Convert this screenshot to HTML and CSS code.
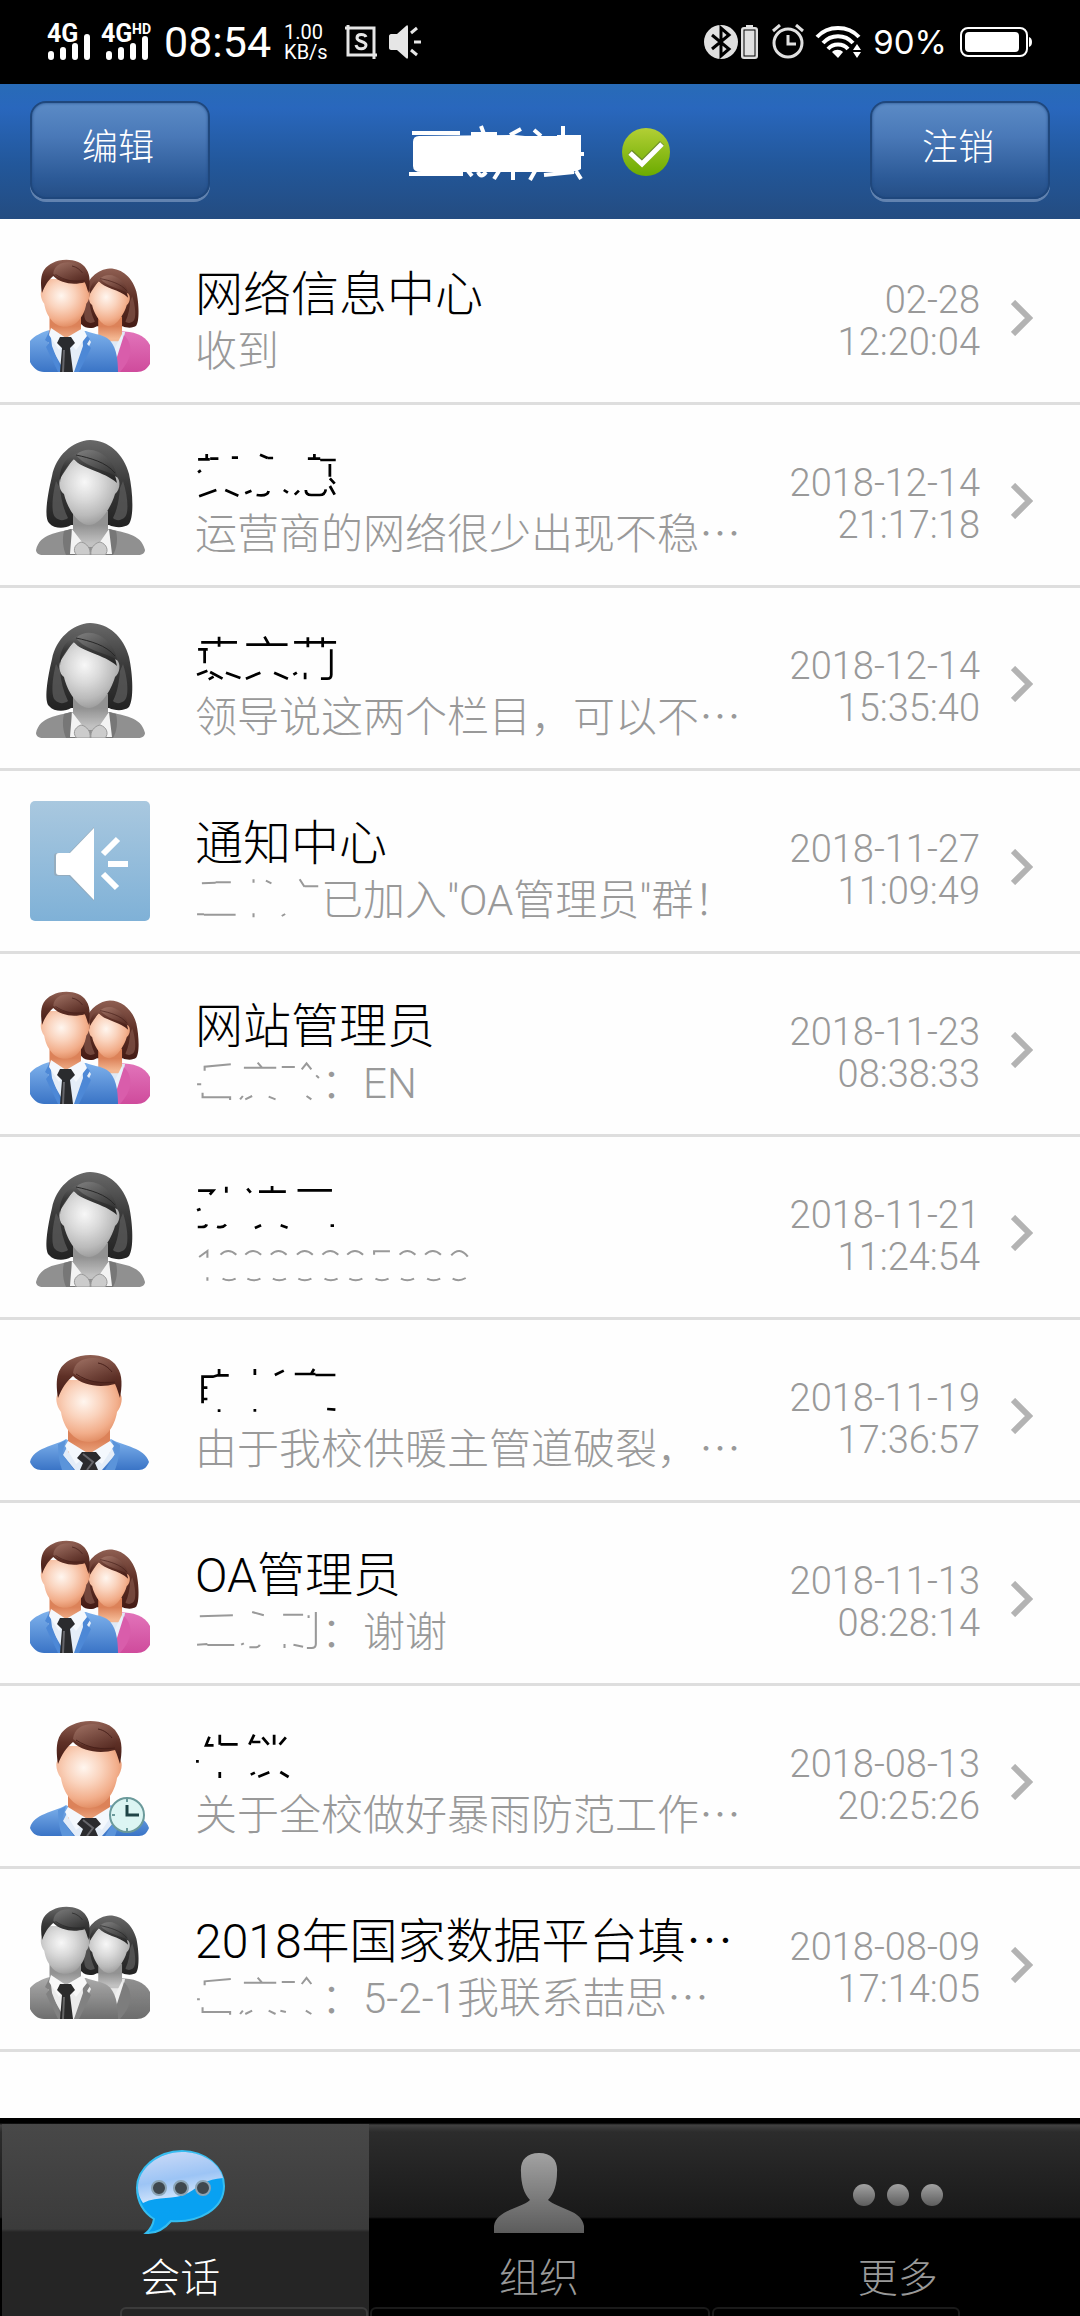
FILE: index.html
```html
<!DOCTYPE html>
<html lang="zh-CN">
<head>
  <meta charset="UTF-8" />
  <meta name="viewport" content="width=device-width, initial-scale=1" />
  <title>会话</title>
  <link rel="stylesheet" href="styles.css">
</head>
<body>
  <!-- Shared icons -->
  <svg class="defs" width="0" height="0" aria-hidden="true">
    <defs>
      <radialGradient id="skin" cx="0.42" cy="0.35" r="0.68">
        <stop offset="0" stop-color="#fff6ef" />
        <stop offset="0.4" stop-color="#fad3bd" />
        <stop offset="0.75" stop-color="#f2ae8b" />
        <stop offset="1" stop-color="#e08a60" />
      </radialGradient>
      <linearGradient id="neck" x1="0" y1="0" x2="0" y2="1">
        <stop offset="0.4" stop-color="#dc8259" />
        <stop offset="0.9" stop-color="#f4b893" />
      </linearGradient>
      <linearGradient id="hair" x1="0" y1="0" x2="0" y2="1">
        <stop offset="0" stop-color="#8f5f52" />
        <stop offset="0.5" stop-color="#5e3026" />
        <stop offset="1" stop-color="#431a14" />
      </linearGradient>
      <linearGradient id="lock" x1="0" y1="0" x2="1" y2="1">
        <stop offset="0" stop-color="#a87b6d" />
        <stop offset="1" stop-color="#542820" />
      </linearGradient>
      <linearGradient id="blue" x1="0" y1="0" x2="0" y2="1">
        <stop offset="0" stop-color="#7fb2ec" />
        <stop offset="1" stop-color="#3a74c6" />
      </linearGradient>
      <linearGradient id="pink" x1="0" y1="0" x2="0" y2="1">
        <stop offset="0" stop-color="#e274ba" />
        <stop offset="1" stop-color="#cf4b9c" />
      </linearGradient>
      <linearGradient id="sky" x1="0" y1="0" x2="0" y2="1">
        <stop offset="0" stop-color="#a9c8df" />
        <stop offset="1" stop-color="#7fb1d7" />
      </linearGradient>
      <linearGradient id="green" x1="0" y1="0" x2="0" y2="1">
        <stop offset="0" stop-color="#b2cf35" />
        <stop offset="1" stop-color="#6bab00" />
      </linearGradient>
      <linearGradient id="bubbleTop" x1="0" y1="0" x2="0.3" y2="1">
        <stop offset="0" stop-color="#cfdcf7" />
        <stop offset="0.6" stop-color="#9cc4f5" />
        <stop offset="1" stop-color="#d7e8fc" />
      </linearGradient>
      <linearGradient id="metal" x1="0" y1="0" x2="0" y2="1">
        <stop offset="0" stop-color="#a2a2a2" />
        <stop offset="1" stop-color="#5c5c5c" />
      </linearGradient>
    </defs>

    <symbol id="man-head" viewBox="0 0 120 120">
      <path d="M38 76h42v26L59 114 38 102z" fill="url(#neck)" />
      <path d="M28 44c-3 2-2 12 3 18 2 14 12 30 28 30s26-16 28-30c5-6 6-16 3-18L86 30H34z" fill="url(#skin)" />
      <path d="M28 48c-3-20-1-32 14-39C56 2 80 4 87 17c6 8 5 20 3 31-2-6-3-10-5-14-14 4-32 2-42-8-7 6-11 12-15 22z" fill="url(#hair)" />
      <path d="M43 23c1-10 9-15 20-15 10 0 17 4 22 12 2 4 2 8 0 10-15 4-33 1-42-7z" fill="url(#lock)" opacity="0.75" />
      <path d="M68 13c6 1 11 5 14 9M46 24c12 8 25 10 39 8" fill="none" stroke="#47201a" />
    </symbol>

    <symbol id="woman-head" viewBox="0 0 120 120">
      <path d="M60 5c-18 1-34 16-38 36-5 21-8 42-3 47 5 6 16 6 22 2h38c6 3 16 3 20-1 5-7 4-32 0-50C94 19 78 5 60 5z" fill="url(#hair)" />
      <path d="M26 46c-4 15-5 32-1 36 4 4 9 4 13 1-5-10-7-20-8-30zM93 46c5 15 6 32 2 36-4 4-9 4-12 1 5-10 6-20 7-30z" fill="#7d5045" opacity="0.8" />
      <path d="M43 76h35v36H43z" fill="url(#neck)" />
      <path d="M31 42c-3 4-2 14 3 17 3 14 14 31 25 31s22-17 26-31c5-4 6-13 2-17L43 24z" fill="url(#skin)" />
      <path d="M30 48c0-8 6-16 14-24 7 10 30 12 43 24-2-12-10-26-22-32-12-2-28 4-32 14-3 6-4 12-3 18z" fill="url(#hair)" />
      <path d="M46 20c10-9 22-5 30 2 6 6 10 12 11 20-12-8-31-9-41-22z" fill="url(#lock)" opacity="0.8" />
      <path d="M46 20c14 3 30 7 39 18" fill="none" stroke="#47201a" />
    </symbol>

    <symbol id="man" viewBox="0 0 120 120">
      <path d="M36 89C23 97 4 97 0 112c2 5 6 8 11 8h98c5 0 8-3 10-8-5-15-24-15-38-23L59 102z" fill="url(#blue)" />
      <path d="M40 91l-7 14 12 15h27l13-15-6-14-20 11z" fill="#e4edf8" />
      <path d="M36 90l-4 14 12 16H32c-3-8-4-18-4-26zM82 90l3 14-10 16h10c3-8 5-18 5-25z" fill="#5b94da" />
      <use href="#man-head" width="120" height="120" />
      <path d="M59 104l-21-13-3 5 11 18zM59 104l21-13 4 5-12 18z" fill="#f4f8fd" />
      <path d="M52 102h14l5 6-6 5 3 7H50l3-7-6-5z" fill="#2b2b2e" />
      <path d="M53 104l10 8-6 8" fill="none" stroke="#66666b" stroke-width="2" />
    </symbol>

    <symbol id="woman" viewBox="0 0 120 120">
      <path d="M41 94C28 98 10 98 6 115c0 3 3 5 7 5h95c4 0 7-2 7-5-4-17-22-17-35-21z" fill="#909090" />
      <path d="M34 96c-2 8-1 17 2 24h9l-4-26zM86 96c2 8 1 17-3 24h-9l5-26z" fill="#777" />
      <use href="#woman-head" width="120" height="120" />
      <path d="M42 94l-2 25h20l-8-12zM79 94l3 25H61l9-12z" fill="#f3f3f3" />
      <path d="M51 107c-8 3-8 10-4 13h13c1-6-3-12-9-13zM70 107c-6 1-10 7-9 13h14c4-4 2-11-5-13z" fill="#ccc" stroke="#999" />
    </symbol>

    <symbol id="group" viewBox="0 0 120 120">
      <g>
        <path d="M70 82c14-4 42-6 50 11v19c-3 5-7 8-13 8H76z" fill="url(#pink)" />
        <path d="M68 80h27l-3 16-7 12z" fill="#dfe9f5" />
        <use href="#woman-head" width="120" height="120" transform="translate(39 13) scale(0.68)" />
        <path d="M92 82l3 16-8 22h-3l-2-18z" fill="#e9f1fa" />
        <path d="M94 83c10 10 8 24-4 37h-3l-1-12z" fill="#d95dab" />
      </g>
      <path d="M20 78C12 80 4 84 0 89v21c3 6 8 10 14 10h74c0-14-2-28-11-34-6-4-14-4-21-7z" fill="url(#blue)" />
      <path d="M23 77l-5 13 17 30h12l14-30-9-13z" fill="#e4edf8" />
      <path d="M20 78l-5 10 4 3-3 4 12 25h4L22 94zM52 78l8 9-3 5 4 4-12 24h-5l9-26z" fill="#4d88d6" />
      <use href="#man-head" width="120" height="120" transform="translate(-9 4) scale(0.75 0.77)" />
      <path d="M36 86L21 76l-2 7 10 15zM36 86l17-10 4 8-11 14z" fill="#f4f8fd" />
      <path d="M30 85h11l4 6-5 5 3 24H30l2-24-5-5z" fill="#2a2b2e" />
      <path d="M34 98l-1 22" stroke="#66666b" stroke-width="2" />
    </symbol>

    <symbol id="speaker" viewBox="0 0 120 120">
      <rect width="120" height="120" rx="5" fill="url(#sky)" />
      <path d="M27 52c-2 0-3 1-3 3v17c0 2 1 3 3 3h12l25 25V26L39 52z" fill="#95a6b3" opacity="0.7" />
      <path d="M29 52c-2 0-3 1-3 3v16c0 2 1 3 3 3h11l24 25V27L40 52z" fill="#fff" />
      <path d="M73 53l15-15M78 63h20M73 73l14 14" stroke="#fff" stroke-width="6" />
    </symbol>
  </svg>

  <!-- Phone status bar -->
  <div class="status">
    <div class="status-side">
      <svg class="signal" width="44" height="36" viewBox="0 0 44 36">
        <text x="-1" y="18" class="net">4G</text>
        <path d="M3 30v3M15 26v7M27 22v11M39 13v20" stroke="#fff" stroke-width="6" stroke-linecap="round" />
      </svg>
      <svg class="signal" width="52" height="36" viewBox="0 0 52 36">
        <text x="-1" y="18" class="net">4G</text>
        <text x="30" y="10" class="hd">HD</text>
        <path d="M7 30v3M19 26v7M31 22v11M43 15v18" stroke="#fff" stroke-width="6" stroke-linecap="round" />
      </svg>
      <span class="clock">08:54</span>
      <span class="speed">1.00<br />KB/s</span>
      <svg class="shot" width="32" height="34" viewBox="0 0 32 34" fill="none" stroke="#e6e6e6" stroke-width="3">
        <path d="M0 3h29v31M3 0v30h29" />
        <path d="M21 12c-1-3-9-4-9 1 0 4 9 3 9 7 0 5-9 5-10 0" />
      </svg>
      <svg width="32" height="34" viewBox="0 0 32 34">
        <path d="M2 9h6l9-8c1-1 2-1 2 1v30c0 2-1 2-2 1l-9-8H2c-1 0-2-1-2-2V11c0-1 1-2 2-2z" fill="#e6e6e6" />
        <path d="M22 8l6-5M25 17h8M22 25l6 5" stroke="#e6e6e6" stroke-width="3" />
      </svg>
    </div>
    <div class="status-side right">
      <svg width="56" height="36" viewBox="0 0 56 36">
        <circle cx="18" cy="18" r="17" fill="#e0e0e0" />
        <path d="M9 11l17 14-8 7V4l8 7L9 25" fill="none" stroke="#000" stroke-width="3" />
        <path d="M43 1h7v3h-7z" fill="#e0e0e0" />
        <rect x="38" y="3" width="17" height="32" rx="3" fill="#e0e0e0" />
        <rect x="41" y="6" width="11" height="26" fill="none" stroke="#000" />
      </svg>
      <svg class="alarm" width="34" height="36" viewBox="0 0 34 36" fill="none" stroke="#e0e0e0" stroke-width="3">
        <circle cx="17" cy="19" r="14" />
        <path d="M17 11v9h8M2 7l7-6M25 1l7 6" />
      </svg>
      <svg class="wifi" width="46" height="34" viewBox="0 0 46 34">
        <path d="M2 12c11-12 31-12 42 0M8 18c8-9 22-9 30 0M13 24c5-6 15-6 20 0" fill="none" stroke="#fff" stroke-width="4" />
        <path d="M17 27c3-3 8-3 11 0l-5 6z" fill="#fff" />
        <path d="M38 25l4-6 4 6zM38 27l4 6 4-6z" fill="#fff" />
      </svg>
      <span class="percent">90%</span>
      <svg class="battery" width="72" height="30" viewBox="0 0 72 30">
        <rect x="1" y="1" width="66" height="28" rx="7" fill="none" stroke="#fff" stroke-width="2" />
        <rect x="5" y="5" width="54" height="20" rx="4" fill="#fff" />
        <path d="M69 10q3 1 3 5t-3 5z" fill="#fff" />
      </svg>
    </div>
  </div>

  <!-- Title bar -->
  <header class="topbar">
    <button type="button" class="bar-btn">编辑</button>
    <h1 class="title">
      <svg width="176" height="60" viewBox="408 122 176 60" role="img" aria-label="已隐藏">
        <path d="M418 136q-6 0-6 6v24q0 6 8 6h142l14-1 4-2v-33h-56l-10-1z" fill="#fff" />
        <path d="M411 133h48M408 174h54M470 134h26M480 126l3 8M509 135l11-6M533 130l7 6M562 126v10M556 137h24M578 154h5M543 175l30-3M575 171l5 8M467 171l4 5M477 172q3 7 8 0M493 179l5-8M512 171v9M529 180l5-9" fill="none" stroke="#fff" stroke-width="4" />
      </svg>
      <svg width="50" height="50" viewBox="0 0 50 50" role="img" aria-label="在线">
        <circle cx="25" cy="25" r="24" fill="url(#green)" />
        <path d="M9 25l12 11 20-20" fill="none" stroke="#6d8d2a" stroke-width="6" />
        <path d="M9 26l12 11 20-20" fill="none" stroke="#fff" stroke-width="5" />
      </svg>
    </h1>
    <button type="button" class="bar-btn">注销</button>
  </header>

  <!-- Conversations -->
  <ul class="chats">
    <li>
      <a href="#" class="chat">
        <svg class="avatar"><use href="#group" /></svg>
        <div class="text">
          <div class="name">网络信息中心</div>
          <div class="msg">收到</div>
        </div>
        <time class="when">02-28<br />12:20:04</time>
        <svg class="arrow" viewBox="0 0 22 36"><path d="M2 2l16 16L2 34" /></svg>
      </a>
    </li>
    <li>
      <a href="#" class="chat">
        <svg class="avatar gray"><use href="#woman" /></svg>
        <div class="text">
          <div class="name">
            <svg class="mask" width="160" height="60" viewBox="566 645 465 180" preserveAspectRatio="none" role="img" aria-label="已隐藏">
              <path d="M575 688h34M600 672v18M610 686h24M673 683h18M755 674l22 10M777 684h16M894 686h36M913 672v14M930 690h45M958 702v38M575 727l8-6M578 799l50-19M654 780l38 17M712 790l18-8M745 795q32 5 35-12M824 780l12 8M856 794l12-12M888 780q0 15 16 15h24q16 0 18-17M958 745l14 16M958 768l14 26" />
            </svg>
          </div>
          <div class="msg">运营商的网络很少出现不稳⋯</div>
        </div>
        <time class="when">2018-12-14<br />21:17:18</time>
        <svg class="arrow" viewBox="0 0 22 36"><path d="M2 2l16 16L2 34" /></svg>
      </a>
    </li>
    <li>
      <a href="#" class="chat">
        <svg class="avatar gray"><use href="#woman" /></svg>
        <div class="text">
          <div class="name">
            <svg class="mask" width="160" height="60" viewBox="566 114 465 180" preserveAspectRatio="none" role="img" aria-label="已隐藏">
              <path d="M584 157h104M636 140v30M575 178h28M594 178v42M572 254l30-12M606 268l14-8M610 246l36 20M656 248l42 16M715 164h120M768 140l12 22M714 266l42-18M796 248l40 18M854 157h122M894 142v30M937 142v30M962 178v76q0 12-12 12h-18M886 248v20M852 254l10-6" />
            </svg>
          </div>
          <div class="msg">领导说这两个栏目，可以不⋯</div>
        </div>
        <time class="when">2018-12-14<br />15:35:40</time>
        <svg class="arrow" viewBox="0 0 22 36"><path d="M2 2l16 16L2 34" /></svg>
      </a>
    </li>
    <li>
      <a href="#" class="chat">
        <svg class="avatar"><use href="#speaker" /></svg>
        <div class="text">
          <div class="name">通知中心</div>
          <div class="msg">
            <svg class="mask" width="126" height="54" viewBox="566 843 366 162" preserveAspectRatio="none" role="img" aria-label="已隐藏">
              <path d="M586 880l40-2M626 877h44M572 973h20M592 974h92M736 868v10M772 872l16 8M736 970v12M818 978l10-6M870 868l14 22M884 889h40" />
            </svg>已加入"OA管理员"群！
          </div>
        </div>
        <time class="when">2018-11-27<br />11:09:49</time>
        <svg class="arrow" viewBox="0 0 22 36"><path d="M2 2l16 16L2 34" /></svg>
      </a>
    </li>
    <li>
      <a href="#" class="chat">
        <svg class="avatar"><use href="#group" /></svg>
        <div class="text">
          <div class="name">网站管理员</div>
          <div class="msg">
            <svg class="mask" width="126" height="54" viewBox="566 282 366 162" preserveAspectRatio="none" role="img" aria-label="已隐藏">
              <path d="M594 332v-12l76-7M572 373h12M588 398v14h80v8M708 323h94M748 308l12 14M818 321h38M876 328l14-18 14 18M918 346l8 8M697 418l8-10M712 418l20-10M780 410l20 8M890 408l14 10" />
            </svg>：EN
          </div>
        </div>
        <time class="when">2018-11-23<br />08:38:33</time>
        <svg class="arrow" viewBox="0 0 22 36"><path d="M2 2l16 16L2 34" /></svg>
      </a>
    </li>
    <li>
      <a href="#" class="chat">
        <svg class="avatar gray"><use href="#woman" /></svg>
        <div class="text">
          <div class="name">
            <svg class="mask" width="160" height="60" viewBox="566 651 465 180" preserveAspectRatio="none" role="img" aria-label="已隐藏">
              <path d="M575 692h44l-10 12M657 680v18M718 686l10 12M752 695h78M790 678v18M864 691h100M572 751l10-4M574 801h12q12 0 14-8M630 800q16 5 26-6M740 804l18-8M815 796l20 7M960 797h10" />
            </svg>
          </div>
          <div class="msg">
            <svg class="mask" width="280" height="54" viewBox="566 831 813 162" preserveAspectRatio="none" role="img" aria-label="已隐藏">
              <path d="M578 891l24-18v20M602 952v10M640 884q22-22 46 0M712 884q22-22 46 0M786 884q22-22 46 0M862 884q22-22 46 0M936 884q22-22 46 0M1008 884q22-22 46 0M1086 884v-10h46M1160 884q22-22 46 0M1234 884q22-22 46 0M1310 886q24-28 48 4M646 956q18 10 38 0M718 956q18 10 38 0M792 956q18 10 38 0M866 956q18 10 38 0M942 956q18 10 38 0M1014 956q18 10 38 0M1090 956q18 10 38 0M1164 956q18 10 38 0M1240 956q18 10 38 0M1314 956q18 10 38-2" />
            </svg>
          </div>
        </div>
        <time class="when">2018-11-21<br />11:24:54</time>
        <svg class="arrow" viewBox="0 0 22 36"><path d="M2 2l16 16L2 34" /></svg>
      </a>
    </li>
    <li>
      <a href="#" class="chat">
        <svg class="avatar"><use href="#man" /></svg>
        <div class="text">
          <div class="name">
            <svg class="mask" width="160" height="60" viewBox="566 120 465 180" preserveAspectRatio="none" role="img" aria-label="已隐藏">
              <path d="M588 250v-80h30l14-4h32M588 203h14M588 237h14M636 147v18M740 147v18M798 165l26-13M856 162h60M912 147l-8 14M916 165h58M636 268v8M736 271h8M950 267l24 2" />
            </svg>
          </div>
          <div class="msg">由于我校供暖主管道破裂，⋯</div>
        </div>
        <time class="when">2018-11-19<br />17:36:57</time>
        <svg class="arrow" viewBox="0 0 22 36"><path d="M2 2l16 16L2 34" /></svg>
      </a>
    </li>
    <li>
      <a href="#" class="chat">
        <svg class="avatar"><use href="#group" /></svg>
        <div class="text">
          <div class="name">OA管理员</div>
          <div class="msg">
            <svg class="mask" width="126" height="54" viewBox="566 849 366 162" preserveAspectRatio="none" role="img" aria-label="已隐藏">
              <path d="M580 889l96-3M572 974l30-2M602 975h78M732 876l34 10M822 884h58M896 886v8M917 876v96q0 12-12 12h-14M724 982h14q14 0 16-8M700 974l8-4M826 972v12M852 974l28 6" />
            </svg>：谢谢
          </div>
        </div>
        <time class="when">2018-11-13<br />08:28:14</time>
        <svg class="arrow" viewBox="0 0 22 36"><path d="M2 2l16 16L2 34" /></svg>
      </a>
    </li>
    <li>
      <a href="#" class="chat">
        <svg class="avatar" viewBox="0 0 120 120">
          <use href="#man" />
          <circle cx="97" cy="99" r="17" fill="#dcf5f3" stroke="#6b9a9b" stroke-width="2" />
          <path d="M97 89v10h12" fill="none" stroke="#1f4447" stroke-width="3" />
          <path d="M97 83v3M97 112v3M82 99h3" stroke="#6b9a9b" stroke-width="2" />
        </svg>
        <div class="text">
          <div class="name">
            <svg class="mask" width="160" height="60" viewBox="566 138 465 180" preserveAspectRatio="none" role="img" aria-label="已隐藏">
              <path d="M608 170l-10 26h22M638 164v30M640 193h50M738 164l-14 30M732 186h24M762 172l18 22M796 164v30M830 172l-18 22M573 240v8M638 276v18M728 284l12-6M750 290l32-13M814 276l24 15" />
            </svg>
          </div>
          <div class="msg">关于全校做好暴雨防范工作⋯</div>
        </div>
        <time class="when">2018-08-13<br />20:25:26</time>
        <svg class="arrow" viewBox="0 0 22 36"><path d="M2 2l16 16L2 34" /></svg>
      </a>
    </li>
    <li>
      <a href="#" class="chat">
        <svg class="avatar gray"><use href="#group" /></svg>
        <div class="text">
          <div class="name">2018年国家数据平台填⋯</div>
          <div class="msg">
            <svg class="mask" width="126" height="54" viewBox="566 867 366 162" preserveAspectRatio="none" role="img" aria-label="已隐藏">
              <path d="M594 916v-12l76-7M572 958h8M588 982v14h80v8M708 908h94M748 893l12 14M818 906h38M876 912l14-18 14 18M697 1002l8-10M712 1002l20-10M780 992l20 10M814 992l16 4M888 992l16 10" />
            </svg>：5-2-1我联系喆思⋯
          </div>
        </div>
        <time class="when">2018-08-09<br />17:14:05</time>
        <svg class="arrow" viewBox="0 0 22 36"><path d="M2 2l16 16L2 34" /></svg>
      </a>
    </li>
  </ul>

  <!-- Bottom tabs -->
  <nav class="tabs">
    <a href="#" class="tab active">
      <svg width="90" height="90" viewBox="0 0 90 90">
        <path d="M47 4C22 4 2 22 2 41c0 14 7 25 17 31-1 6-4 11-8 14 11 1 19-5 25-12 28 2 53-12 53-35C89 20 70 4 47 4z" fill="#08a1f2" stroke="#35bdf0" stroke-width="2" />
        <path d="M47 5C23 5 3 22 3 41c0 6 2 11 5 15 16-8 30-2 45-10 12-7 18-14 35-15C84 15 66 5 47 5z" fill="url(#bubbleTop)" />
        <g fill="#3f484e" stroke="#8ba4b5" stroke-width="2">
          <circle cx="24" cy="41" r="7" />
          <circle cx="46" cy="41" r="7" />
          <circle cx="68" cy="41" r="7" />
        </g>
      </svg>
      <span>会话</span>
    </a>
    <a href="#" class="tab">
      <svg width="90" height="90" viewBox="0 0 90 90">
        <path d="M45 6c-13 0-19 8-18 19 0 12 3 22 9 28C26 62 2 63 0 79v7h90v-7C88 63 64 62 54 53c6-6 9-16 9-28C64 14 58 6 45 6z" fill="url(#metal)" />
      </svg>
      <span>组织</span>
    </a>
    <a href="#" class="tab">
      <svg width="90" height="90" viewBox="0 0 90 90" fill="url(#metal)">
        <circle cx="11" cy="48" r="11" />
        <circle cx="45" cy="48" r="11" />
        <circle cx="79" cy="48" r="11" />
      </svg>
      <span>更多</span>
    </a>
    <div class="edge"><i></i><i></i><i></i></div>
  </nav>
</body>
</html>
```

FILE: styles.css
```css
* {
  margin: 0;
  padding: 0;
  box-sizing: border-box;
}
body {
  min-height: 100vh;
  display: flex;
  flex-direction: column;
  background: #fefefe;
  font-family: Roboto, 'Noto Sans CJK SC', sans-serif;
  font-weight: 300;
  color: #000;
}
a {
  color: inherit;
  text-decoration: none;
}
svg {
  display: block;
  flex: none;
}
.defs {
  position: absolute;
}

/* Status bar */
.status {
  height: 84px;
  padding: 0 48px;
  display: flex;
  justify-content: space-between;
  align-items: center;
  background: #000;
  color: #fff;
  font-weight: 400;
}
.status-side {
  display: flex;
  align-items: center;
}
.signal {
  margin-right: 10px;
  overflow: visible;
}
.net {
  font-size: 25px;
  font-weight: 700;
  fill: #fff;
}
.hd {
  font-size: 14px;
  font-weight: 700;
  fill: #fff;
}
.clock {
  font-size: 43px;
  line-height: 48px;
}
.speed {
  margin: 0 17px 0 13px;
  font-size: 20px;
  line-height: 20px;
}
.shot {
  margin-right: 12px;
}
.alarm {
  margin-left: 12px;
}
.wifi {
  margin: 0 12px 0 10px;
}
.percent {
  margin-right: 13px;
  font-family: Inter, sans-serif;
  font-size: 33px;
  line-height: 40px;
}

/* Title bar */
.topbar {
  height: 135px;
  padding: 0 30px;
  display: flex;
  justify-content: space-between;
  align-items: center;
  background: linear-gradient(#286bb7, #2967bd 18%, #22579a 60%, #244c81);
}
.title {
  display: flex;
  align-items: center;
  gap: 36px;
}
.bar-btn {
  width: 180px;
  height: 98px;
  margin-bottom: 3px;
  padding: 0 4px 4px 0;
  border: 2px solid #1f477c;
  border-radius: 16px;
  background: linear-gradient(#5b8bc6, #4a79b8 35%, #2c5a97 80%, #264f86);
  box-shadow: 0 3px 0 #6283b0, inset 0 0 3px #1f4b87;
  font: inherit;
  font-size: 36px;
  line-height: 48px;
  color: #fff;
}

/* Conversation list */
.chats {
  flex: 1;
  padding-top: 3px;
  list-style: none;
}
.chat {
  height: 183px;
  padding: 0 47px 0 30px;
  display: flex;
  align-items: flex-start;
  border-bottom: 3px solid #dedede;
}
.avatar {
  width: 120px;
  height: 120px;
  margin: 30px 45px 0 0;
}
.gray {
  filter: grayscale(1);
}
.text {
  flex: 1;
  min-width: 0;
  padding-top: 43px;
  white-space: nowrap;
}
.name {
  height: 60px;
  display: flex;
  font-size: 48px;
  line-height: 60px;
}
.msg {
  height: 54px;
  display: flex;
  font-size: 42px;
  line-height: 54px;
  color: #999;
}
.mask {
  margin-top: -3px;
  fill: none;
  stroke: currentColor;
  stroke-width: 6;
}
.name .mask {
  stroke-width: 8;
}
.when {
  padding-top: 57px;
  font-size: 38px;
  line-height: 42px;
  text-align: right;
  color: #999;
}
.arrow {
  width: 22px;
  height: 36px;
  margin: 78px 0 0 31px;
  fill: none;
  stroke: #b3b3b3;
  stroke-width: 6;
}

/* Bottom tabs */
.tabs {
  position: relative;
  height: 198px;
  padding: 6px 3px 0 1px;
  display: grid;
  grid-template-columns: repeat(3, 1fr);
  background: linear-gradient(#000 5px, #424242 7px, #2c2c2c 14px, #191919 99px, #000 101px);
}
.tab {
  position: relative;
  padding-top: 23px;
  display: flex;
  flex-direction: column;
  align-items: center;
  font-size: 40px;
  line-height: 48px;
  color: #999;
}
.tab svg,
.tab span {
  position: relative;
}
.tab span {
  margin-top: 18px;
}
.active {
  color: #fff;
}
.active::before {
  content: '';
  position: absolute;
  inset: 0 -9px 0 1px;
  background: linear-gradient(#484848, #3b3b3b 105px, #252525 108px);
}
.edge {
  position: absolute;
  left: 120px;
  right: 120px;
  bottom: 0;
  height: 9px;
  display: grid;
  grid-template-columns: 248px 1fr 248px;
  gap: 2px;
}
.edge i {
  border: 2px solid rgba(255, 255, 255, 0.1);
  border-bottom: none;
  border-radius: 6px 6px 0 0;
}
```
